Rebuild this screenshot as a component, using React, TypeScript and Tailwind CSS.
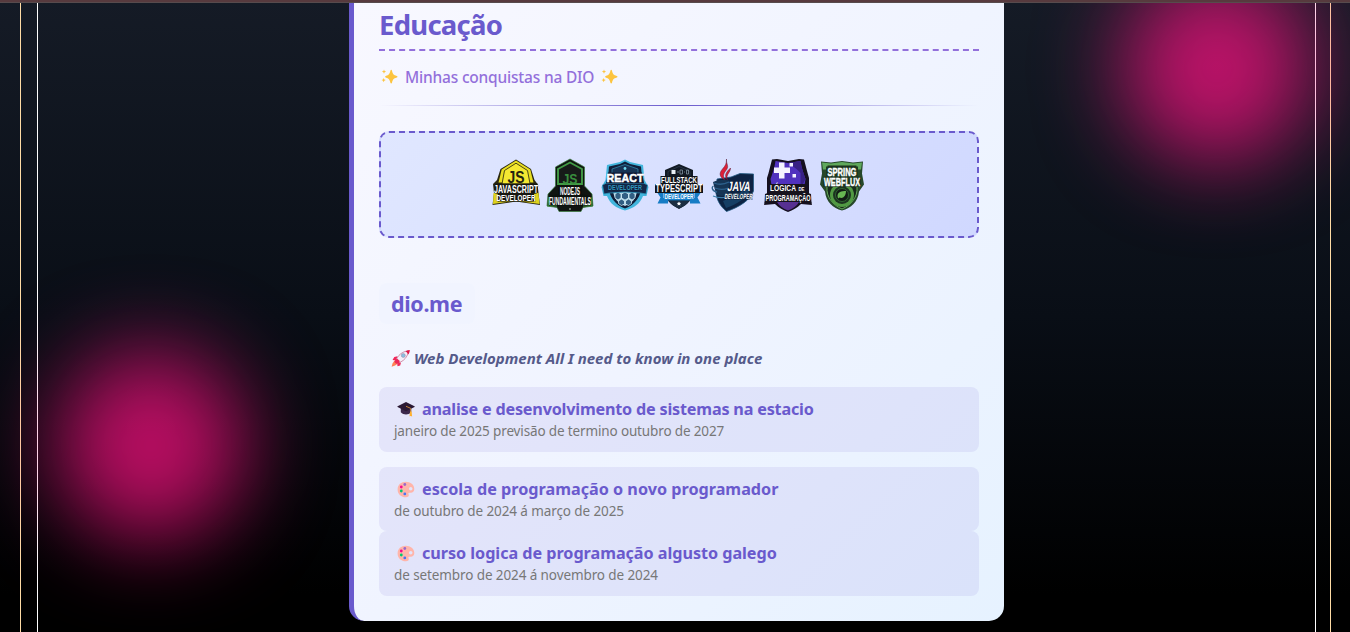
import type { ReactNode } from "react";

const face = "font-['Noto_Sans','Open_Sans',sans-serif]";

function Sparkles() {
  return (
    <svg viewBox="0 0 17 17" className="h-[17px] w-[17px] shrink-0" fill="#fcc43f">
      <path d="M10.2 1.8c.4 0 .6.3.8 1 .8 3.300 1.400 4.100 4.800 5.200.9.300.9 1.200 0 1.500-3.400 1.100-4 1.900-4.800 5.200-.3 1.100-1.300 1.100-1.600 0-.8-3.300-1.500-4.100-4.600-5.200-.9-.3-.9-1.200 0-1.500 3.100-1.100 3.800-1.900 4.600-5.200.2-.7.400-1 .8-1z" />
      <path d="M3 1.500l.6 1.400 1.500.6-1.500.7L3 5.700l-.6-1.500-1.500-.7 1.500-.6zM2.700 10l.6 1.500 1.500.6-1.500.7-.6 1.500-.7-1.500-1.500-.7 1.500-.6z" />
    </svg>
  );
}

function Rocket() {
  return (
    <svg viewBox="0 0 20 18" className="h-[18px] w-5 shrink-0">
      <path d="M3.500 11.500l-2 3-.9 3.200 3.500-1.300 2.800-2z" fill="#ff8257" />
      <path d="M6.500 7.200L3.300 8 1.500 11l3.700.5zM10 13.500l-.8 3-2.700.8-.3-3z" fill="#f0285a" />
      <path d="M5 11.700C6.500 6.500 11 2.500 17.500 1.700 16.800 8 12.600 12.300 7.200 14z" fill="#f4eff8" stroke="#c26a8b" strokeWidth=".7" />
      <path d="M14.500 2.400C15.500 1.900 17 1.200 18.800 1c0 1.800-.7 3.300-1.500 4.600-.6-1.500-1.500-2.500-2.800-3.200z" fill="#df1748" />
      <path d="M4.500 10.500l1.800-.8 2.500 2.200-.7 2.200-3 .7-1.700-1.700z" fill="#ec2858" />
      <circle cx="12.300" cy="6.500" r="2" fill="#88bfe0" stroke="#9a86a5" strokeWidth=".5" />
    </svg>
  );
}

function Cap() {
  return (
    <svg viewBox="0 0 18 16" className="h-4 w-[18px] shrink-0">
      <path d="M3.800 7h10.400v4.300c-2.800 3-7.600 3-10.400 0z" fill="#3b284b" />
      <path d="M9 1l8.500 4.200c.4.200.4.600 0 .8L9.600 10.100c-.4.200-.8.200-1.200 0L.6 6.100c-.4-.2-.4-.6 0-.8z" fill="#2a1833" />
      <path d="M9 5.300l4.700 2v4" fill="none" stroke="#d38b38" strokeWidth=".9" />
      <path d="M13.100 10.400h1.500l.5 5-1.200-.5-1.400.3z" fill="#ffb02e" />
    </svg>
  );
}

function Palette() {
  return (
    <svg viewBox="0 0 18 17" className="h-[17px] w-[18px] shrink-0">
      <path
        fillRule="evenodd"
        d="M8.700.7c4.800 0 8.600 3 8.600 7.300 0 3-2.300 4.300-4.500 3.700-1.300-.3-1.700.5-1.200 1.600.8 1.900-.6 3-2.700 3C4.300 16.300.6 13 .6 8.400.6 3.800 4.200.7 8.700.7zM13.700 6a1.800 1.800 0 1 0 0 3.600 1.800 1.800 0 0 0 0-3.600z"
        fill="#ffb5aa"
      />
      <circle cx="7.800" cy="3.500" r="1.400" fill="#9b68c9" />
      <circle cx="4.300" cy="6" r="1.400" fill="#f70a8d" />
      <circle cx="4.300" cy="10" r="1.400" fill="#00c96f" />
      <circle cx="7.800" cy="12.900" r="1.400" fill="#4974f2" />
    </svg>
  );
}

function Label({ x = 25, y, size, width, fill = "#fff", stroke = "#111", sw = 0.8, children }: {
  x?: number; y: number; size: number; width: number; fill?: string; stroke?: string; sw?: number; children: ReactNode;
}) {
  return (
    <text
      x={x} y={y} fontSize={size} textLength={width} lengthAdjust="spacingAndGlyphs" textAnchor="middle"
      fill={fill} stroke={stroke} strokeWidth={sw} paintOrder="stroke"
      className="font-['Liberation_Sans',sans-serif] font-bold"
    >
      {children}
    </text>
  );
}

function Badge({ children }: { children: ReactNode }) {
  return <svg viewBox="0 0 50 54" className="h-[54px] w-[50px] shrink-0 overflow-visible">{children}</svg>;
}

function JavascriptBadge() {
  return (
    <Badge>
      <path d="M25 1.500L40 11l3.500 11 3 4 1 9 1.500 12-24-3.500L1.500 47l1.500-12-1-9 4-4L9.500 11z" fill="#2b2810" />
      <path d="M25 2.500L39.300 11.500l3.200 13H7.500l3.200-13z" fill="#e9df22" />
      <path d="M25 5.200L36.500 12.500l2.600 13.500H11L13.500 12.500z" fill="#f4e832" stroke="#3a3612" strokeWidth=".9" />
      <path d="M2.500 35l5-1h35l5 1 1 11-23.500-3.300L2 46z" fill="#ded21f" />
      <Label y={25} size={16.500} width={17} fill="#25230f" stroke="none">JS</Label>
      <path d="M3.500 25.500h43V35l-3.500 1v7.500H7V36l-3.500-1z" fill="#181811" />
      <Label y={34.800} size={11.500} width={44} sw={0.4}>JAVASCRIPT</Label>
      <Label y={42.500} size={8.300} width={39} sw={0.4}>DEVELOPER</Label>
    </Badge>
  );
}

function NodeBadge() {
  return (
    <Badge>
      <path d="M25 1l14.500 8v19l7.500 8 1 12-10 1.500-2 4H14l-2-4L2 48l1-12 7.500-8V9z" fill="#101411" stroke="#3a7b3c" strokeWidth=".7" />
      <path d="M25 4.500l12 6.500v15H13V11z" fill="#171b19" stroke="#429b46" strokeWidth="1.900" />
      <Label y={25.500} size={15.500} width={15} fill="#398e3e" stroke="none">JS</Label>
      <path d="M13 27.500h24V36l8 2 2 10H3l2-10 8-2z" fill="#0b100d" />
      <path d="M4 39L3 48h9M46 39l1 9h-9" stroke="#398b3d" strokeWidth="1.200" fill="none" />
      <Label y={37} size={10.500} width={20} sw={0.3}>NODEJS</Label>
      <Label y={47} size={10.500} width={42} sw={0.3}>FUNDAMENTALS</Label>
      <circle cx="25" cy="51" r=".8" fill="#d4ead5" />
    </Badge>
  );
}

function ReactBadge() {
  return (
    <Badge>
      <path d="M25 1.500l5 2.500 13 3 1.500 15 4 7-2 9H43C40 46 34 50 25 52.500 16 50 10 46 7 38H3.500l-2-9 4-7L7 7l13-3z" fill="#42b5dc" />
      <path d="M25 3.500l5 2.500 11 2.500 1.500 17C41 39 35 47 25 50.500 15 47 9 39 7.500 25.500L9 8.500 20 6z" fill="#111e3a" />
      <path d="M12 11l13-4.500L38 11v5H12z" fill="#173354" stroke="#3293b6" strokeWidth=".7" />
      <circle cx="25" cy="10.500" r="1.400" fill="#6fd8ef" />
      <path d="M13 33h24c-1 8-5 12-12 15-7-3-11-7-12-15z" fill="#b5d7e9" />
      <g fill="#315e83" stroke="#d9f3fb" strokeWidth=".7">
        <path d="M25 34l3.500 2v4L25 42l-3.500-2v-4zM18 34l3 2v4l-3 2-3-2v-4zM32 34l3 2v4l-3 2-3-2v-4zM21.500 41l3 2v3l-3 1.500-3-2V43zM28.500 41l3 2v2.500l-3 2-3-1.500v-3z" />
      </g>
      <path d="M2.500 27l4-2h37l4 2-1.500 9-5.500-1-15.500-1-15.500 1L4 36z" fill="#13284a" stroke="#2d95bb" strokeWidth=".8" />
      <path d="M8 14.500h34l2 10.500H6z" fill="#101832" />
      <Label y={24.300} size={11.500} width={37} stroke="#fff" sw={0.5}>REACT</Label>
      <Label y={32} size={6.500} width={34} fill="#3299bf" stroke="#101832">DEVELOPER</Label>
    </Badge>
  );
}

function TypescriptBadge() {
  return (
    <Badge>
      <path d="M25 6l14 6v26c-3 6-8 10-14 13-6-3-11-7-14-13V12z" fill="#121a24" />
      <path d="M25 8.500l11 5V22H14v-8.500z" fill="#111821" stroke="#304253" strokeWidth=".7" />
      <path d="M17.500 12h4v4h-4z" fill="#e9f0f5" />
      <path d="M23 14h2m1-2h2.500v4H26zm4 2h1m1.500-2h2v4h-2z" stroke="#8fa3b2" strokeWidth=".7" fill="none" />
      <path d="M3.500 35h6v5h31v-5h6l-3 4.500 3 6H36v-3H14v3H3.500l3-6z" fill="#167cc5" />
      <path d="M15 43h20c-2 3-5 5.500-10 7.500-5-2-8-4.500-10-7.500z" fill="#1b2d42" />
      <path d="M6.500 18h37v8H49v9H1v-9h5.500z" fill="#10151c" />
      <Label y={25} size={9} width={36} sw={0.2}>FULLSTACK</Label>
      <Label y={34} size={11} width={47} sw={0.2}>TYPESCRIPT</Label>
      <path d="M10 35h30v6.500H10z" fill="#2289d3" />
      <Label y={41} size={7} width={29} stroke="#1675b9" sw={0.3}>DEVELOPER</Label>
      <path d="M25 43.500l.7 1.300 1.500.2-1.100 1 .3 1.500-1.400-.7-1.400.7.300-1.500-1.100-1 1.500-.2z" fill="#fff" />
    </Badge>
  );
}

function JavaBadge() {
  return (
    <Badge>
      <path d="M9 21l14-2 9-3.500 13.500.5v17c-3 9-14 16-27 20.500C12 48 8.500 42 8 34z" fill="#0d2343" stroke="#235b83" strokeWidth=".8" />
      <path d="M15 43l17-8 10-14v11c-3 8-13 14-24 18z" fill="#163f65" />
      <path d="M5 24c6-2.500 13-2.500 17-1l-2 13c-4 2.500-9 2.500-12 0z" fill="#153455" />
      <path d="M6 25c5 2 11 1 15-1M7 30c5 2 9 2 13 0M5.500 28c-2 1-2 5 3.500 6" fill="none" stroke="#2d608c" strokeWidth="1.300" />
      <path d="M5 38c5 2 9 2 14 1" fill="none" stroke="#3d80ad" strokeWidth="1.200" />
      <path d="M18.500 1c-.5 6 3.500 7-1 12-2 3-3 5-.5 9-6-3-6-7-2.500-11 3-3.500 4-5 4-10zM22.500 10c0 5-5 6-3 12-4-5-1-8 3-12z" fill="#dd1f37" stroke="#571b36" strokeWidth=".5" />
      <g transform="skewX(-8)">
        <Label x={35} y={32.800} size={13.500} width={23} stroke="#091934">JAVA</Label>
        <Label x={36} y={41} size={7.500} width={28} stroke="#091934">DEVELOPER</Label>
      </g>
    </Badge>
  );
}

function LogicBadge() {
  return (
    <Badge>
      <path d="M9 1.500L14 1l11 2 11-2 5 .5c2 7 3 12 5 18.500v15l3 12-11-1c-4 4-8 6-13 8-5-2-9-4-13-8L1 47l3-12V20C6 14 7 9 9 1.500z" fill="#15101f" />
      <path d="M12.500 3L25 5l12.500-2c1 7 3 12 5 18l-2 12-15.500 4-15.500-4-2-12c2-6 4-11 5-18z" fill="#5031be" />
      <path d="M25 5l12.500-2c1 7 3 12 5 18l-5 10V15l-4-4z" fill="#372084" />
      <path d="M16 4.500h5.500v5h5.500V15h-5.500v5.500H16V15h-5V9.500h5zM26.500 5H30v3.500h-3.500zM29.500 16H33v3.500h-3.500z" fill="#f5f3ff" />
      <path d="M14 44h22c-2 4-6 6.500-11 8.500C20 50.500 16 48 14 44z" fill="#573092" />
      <path d="M8 26h34v8l6 2 .5 9.500L36 43.500H14L1.500 45.500 2 36l6-2z" fill="#16121d" />
      <Label x={20} y={33.300} size={9.500} width={26} sw={0.2}>LÓGICA</Label>
      <Label x={38.500} y={33} size={5} width={6} sw={0.2}>DE</Label>
      <Label y={42.500} size={9} width={45} sw={0.2}>PROGRAMAÇÃO</Label>
    </Badge>
  );
}

function SpringBadge() {
  return (
    <Badge>
      <path d="M4 3.500l10 1L25 3l11 1.500 10-1-1 12 2 11-5 7C41 44 34 50 25 52.500 16 50 9 44 8 33.500l-5-7 2-11z" fill="#26482a" />
      <path d="M5 4.500l9 1L25 4l11 1.500 9-1-1 7H6z" fill="#5fa85d" />
      <path d="M10 7h30v22c1 10-6 18-15 22-9-4-16-12-15-22z" fill="#182b1c" stroke="#63aa58" strokeWidth="1" />
      <circle cx="25" cy="37" r="12" fill="#519a43" />
      <circle cx="25" cy="37" r="9" fill="#1c3420" />
      <circle cx="25" cy="37" r="6.500" fill="#121c15" stroke="#367338" strokeWidth=".8" />
      <path d="M20.500 38c0-4 4-5 8.500-5 0 5-3 8-6.500 6.500l-1.500 1z" fill="#67b652" />
      <path d="M9 8.500h32v9.500l3 1v10H6V19l3-1z" fill="#1e3822" />
      <Label y={17.500} size={11} width={29} stroke="#fff" sw={0.4}>SPRING</Label>
      <Label y={28} size={11.500} width={36} stroke="#fff" sw={0.4}>WEBFLUX</Label>
    </Badge>
  );
}

function Course({ icon, title, date, className }: { icon: ReactNode; title: ReactNode; date: ReactNode; className: string }) {
  return (
    <article className={`rounded-[8px] bg-[#6a5acd]/10 pt-[10.600px] pl-[15px] ${className}`}>
      <h3 className="flex h-[23px] items-center pl-[3px] text-[16.2px] leading-[23px] font-bold text-[#6a5acd]">
        {icon}
        <span className="ml-[7px]">{title}</span>
      </h3>
      <p className="-mt-[0.600px] text-[13.5px] leading-[22px] text-[#777]">{date}</p>
    </article>
  );
}

export default function App() {
  return (
    <div className={`relative flex h-[632px] w-full flex-col overflow-hidden bg-[linear-gradient(180deg,#151b26_0%,#090e16_50%,#000_94%)] ${face}`}>
      <div className="h-[3px] shrink-0" />
      <div className="flex min-h-0 flex-1 justify-between">
        <div className="ml-5 w-[18px] border-x border-l-[#ffdca5] border-r-white" />
        <div className="mr-[19px] w-4 border-x border-l-white border-r-[#ffdca5]" />
      </div>

      <div className="absolute top-[350px] left-[56px] size-[190px] rounded-full bg-[#ff1184]/72 blur-[43px]" />
      <div className="absolute -top-[27px] left-[1122px] size-[190px] rounded-full bg-[#ff1184]/72 blur-[43px]" />
      <div className="absolute inset-x-0 top-0 h-[3px] border-b border-[#574b4d] bg-[#573a3e]" />

      <main className="absolute top-[3px] left-[349px] h-[618px] w-[655px] rounded-b-[15px] border-l-[5px] border-[#6a5acd] bg-[linear-gradient(135deg,#f8f8ff_0%,#f0f4ff_50%,#e6f2ff_100%)] px-[25px]">
        <h1 className="h-[48px] border-b-2 border-dashed border-[#9370db] text-[27.5px] leading-[43px] font-bold tracking-[-0.75px] text-[#6a5acd]">
          Educação
        </h1>
        <div className="mt-[13px] flex h-6 items-center pl-[2px] text-[15.5px] leading-6 font-medium tracking-[-0.2px] text-[#9370db]">
          <Sparkles />
          <span className="mr-[7px] ml-[7px] pt-px">Minhas conquistas na DIO</span>
          <Sparkles />
        </div>
        <div className="mt-[17px] h-px bg-[linear-gradient(90deg,transparent,#6a5acd,transparent)]" />
        <div className="mt-[25px] flex h-[107px] items-center justify-center gap-[4.300px] rounded-[10px] border-2 border-dashed border-[#6a5acd] bg-[linear-gradient(135deg,#e0e7ff,#d0d8ff)]">
          <JavascriptBadge />
          <NodeBadge />
          <ReactBadge />
          <TypescriptBadge />
          <JavaBadge />
          <LogicBadge />
          <SpringBadge />
        </div>
        <h2 className="mt-[45px] h-[41px] w-24 rounded-[8px] bg-[#f0f4ff]/70 pl-3 text-[21.5px] leading-[41px] font-bold tracking-[-0.35px] text-[#6a5acd]">
          dio.me
        </h2>
        <p className="mt-[22px] flex h-6 items-center pl-3 text-[15px] leading-6 font-bold text-[#555a8a] italic">
          <Rocket />
          <span className="ml-[3px]">Web Development All I need to know in one place</span>
        </p>
        <section className="mt-[17px]">
          <Course
            className="h-[65px]"
            icon={<Cap />}
            title={<span className="tracking-[-0.2px]">analise e desenvolvimento de sistemas na estacio</span>}
            date={<span className="tracking-[-0.14px]">janeiro de 2025 previsão de termino outubro de 2027</span>}
          />
          <Course
            className="mt-[15px] h-[64.300px]"
            icon={<Palette />}
            title="escola de programação o novo programador"
            date={<span className="tracking-[-0.1px]">de outubro de 2024 á março de 2025</span>}
          />
          <Course
            className="h-[64.700px]"
            icon={<Palette />}
            title={<span className="tracking-[-0.04px]">curso logica de programação algusto galego</span>}
            date={<span className="tracking-[-0.1px]">de setembro de 2024 á novembro de 2024</span>}
          />
        </section>
      </main>
    </div>
  );
}
